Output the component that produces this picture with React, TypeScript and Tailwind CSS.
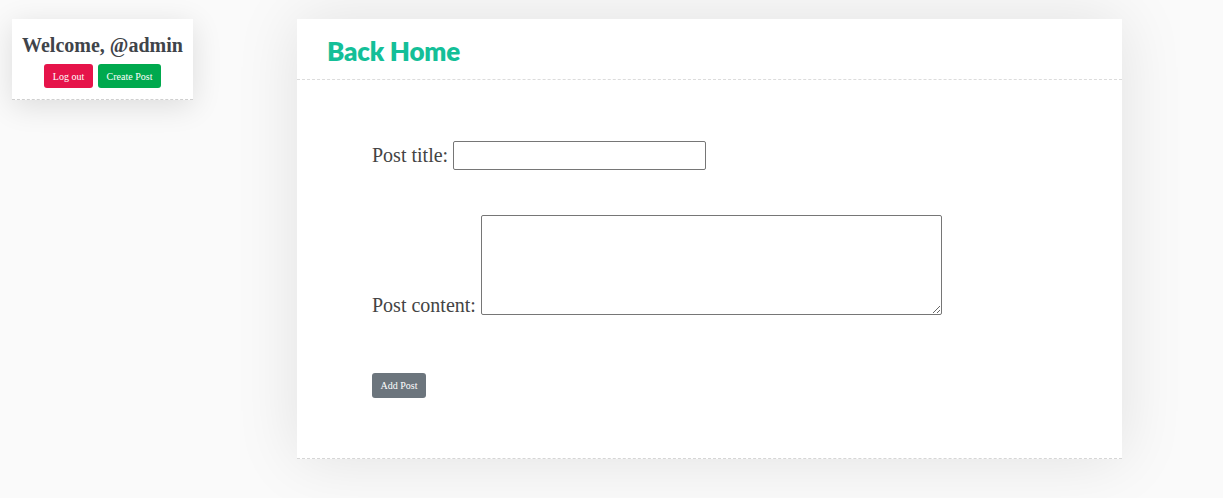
export default function App() {
  return (
    <div className="flex min-h-[498px] w-full items-start bg-[#fafafa] pl-[12px] pt-[19px] font-['Liberation_Serif',serif] text-[#444]">
      <aside className="flex h-[81px] w-[181px] shrink-0 flex-col items-center border-b border-dashed border-[#cfcfcf] bg-white shadow-[0_6px_30px_rgba(0,0,0,0.12)]">
        <h2 className="mt-[14px] text-[20px] leading-[25px] font-bold text-[#3f444a]">Welcome, @admin</h2>
        <div className="mt-[6px] flex gap-[5px]">
          <button className="h-[24px] w-[49px] rounded-[3px] bg-[#e6144a] text-[10px] text-white">Log out</button>
          <button className="h-[24px] w-[63px] rounded-[3px] bg-[#00a94e] text-[10px] text-white">Create Post</button>
        </div>
      </aside>

      <main className="ml-[104px] flex h-[440px] w-[825px] shrink-0 flex-col border-b border-dashed border-[#d6d6d6] bg-white shadow-[0_0_60px_rgba(0,0,0,0.10)]">
        <header className="flex h-[61px] items-center border-b border-dashed border-[#dcdcdc] pl-[30px] pt-[5px]">
          <h1 className="font-['Lato',sans-serif] text-[26px] font-extrabold tracking-[-0.2px] text-[#14bf98]">Back Home</h1>
        </header>
        <form className="flex flex-col items-start pl-[75px] pt-[61px]">
          <div className="flex h-[29px] items-center gap-[5px]">
            <label className="pb-[2px] text-[20px] leading-none">Post title:</label>
            <input className="h-[29px] w-[253px] rounded-[2px] border border-[#767676] bg-white" />
          </div>
          <div className="mt-[45px] flex items-end gap-[5px]">
            <label className="text-[20px] leading-[20px]">Post content:</label>
            <textarea className="h-[100px] w-[461px] rounded-[2px] border border-[#767676] bg-white" />
          </div>
          <button type="button" className="mt-[58px] h-[25px] w-[54px] rounded-[3px] bg-[#6c757d] text-[10px] text-white">
            Add Post
          </button>
        </form>
      </main>
    </div>
  )
}
